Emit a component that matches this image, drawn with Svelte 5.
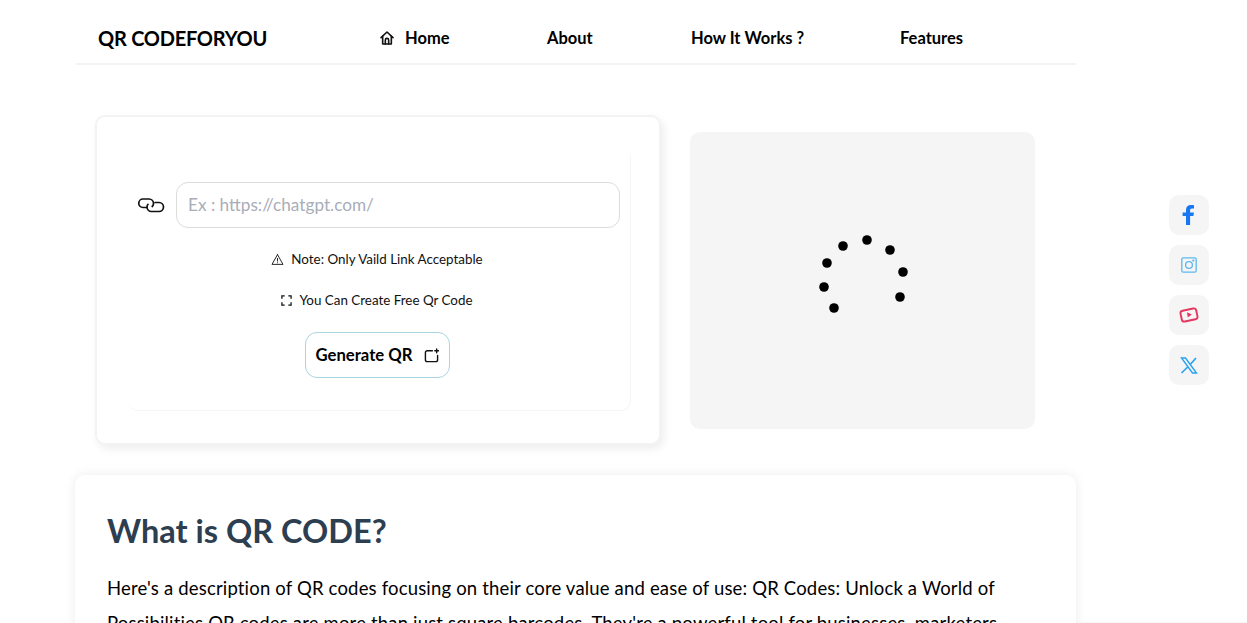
<script>
  const links = [
    { label: 'About', width: 144 },
    { label: 'How It Works ?', width: 209 },
    { label: 'Features', width: 100 }
  ];
  const dots = [
    [74, 10], [97, 20], [110, 42], [107, 67], [41, 78], [31, 57], [34, 33], [50, 16]
  ];
</script>

<div class="page">
  <div class="wrap">
    <header class="nav">
      <div class="logo">QR CODEFORYOU</div>
      <nav class="links">
        <a class="link home" href="#home">
          <svg width="16" height="16" viewBox="0 0 24 24" fill="none" stroke="#111" stroke-width="2.4" stroke-linejoin="round" stroke-linecap="round">
            <path d="M3 11.5 12 3l9 8.5" />
            <path d="M5.5 9.5V21h13V9.500" />
            <path d="M9.5 21v-6a2.5 2.5 0 0 1 5 0v6" />
          </svg>
          Home
        </a>
        {#each links as l}
          <a class="link" href="#x" style="width:{l.width}px">{l.label}</a>
        {/each}
      </nav>
    </header>

    <section class="hero">
      <div class="card">
        <div class="inner">
          <div class="field">
            <svg class="chain" width="28" height="16" viewBox="0 0 28 16" fill="none" stroke="#111" stroke-width="1.7" stroke-linecap="round">
              <path d="M9.500 10.500H6a4.250 4.250 0 0 1 0-8.500h6a4.500 4.500 0 0 1 4.500 4.500 4 4 0 0 1-1.300 3" />
              <path d="M18 5.500h4a4.500 4.500 0 0 1 0 9h-7.500A4.500 4.500 0 0 1 10 10a4 4 0 0 1 1-2.700" />
            </svg>
            <input type="text" placeholder="Ex : https://chatgpt.com/" />
          </div>
          <p class="note first">
            <svg width="13" height="13" viewBox="0 0 24 24" fill="none" stroke="#222" stroke-width="1.8" stroke-linejoin="round" stroke-linecap="round">
              <path d="M12 3 1.8 21h20.4L12 3Z" />
              <path d="M12 10v5M12 18v.2" />
            </svg>
            Note: Only Vaild Link Acceptable
          </p>
          <p class="note second">
            <svg width="11" height="11" viewBox="0 0 12 12" fill="none" stroke="#111" stroke-width="1.4">
              <path d="M1 4V1h3M8 1h3v3M11 8v3H8M4 11H1V8" />
            </svg>
            You Can Create Free Qr Code
          </p>
          <button class="generate">
            Generate QR
            <svg width="15" height="15" viewBox="0 0 16 16" fill="none" stroke="#111" stroke-width="1.5" stroke-linecap="round">
              <path d="M9 3H3.500a2 2 0 0 0-2 2v7.500a2 2 0 0 0 2 2h9a2 2 0 0 0 2-2V8" />
              <path d="M13.500 1v4M11.500 3h4" />
            </svg>
          </button>
        </div>
      </div>

      <div class="preview">
        <svg width="140" height="100" viewBox="0 0 140 100">
          {#each dots as d}
            <circle cx={d[0]} cy={d[1]} r="4.8" fill="#000" />
          {/each}
        </svg>
      </div>
    </section>

    <article class="about">
      <h2>What is QR CODE?</h2>
      <p>Here's a description of QR codes focusing on their core value and ease of use: QR Codes: Unlock a World of Possibilities QR codes are more than just square barcodes. They're a powerful tool for businesses, marketers and individuals alike.</p>
    </article>
  </div>

  <aside class="social">
    <a href="#f" aria-label="Facebook">
      <svg width="14" height="20" viewBox="0 0 14 20"><path fill="#1877f2" d="M4 20V11H.6V7.400H4V5C4 1.800 6 0 8.900 0c1.300 0 2.500.1 3.100.2v3.300h-2c-1.500 0-1.900.8-1.900 1.800v2.100h3.800l-.5 3.600H8.100v9H4Z"/></svg>
    </a>
    <a href="#i" aria-label="Instagram">
      <svg width="16" height="16" viewBox="0 0 16 16" fill="none" stroke="#5db7ee" stroke-width="1.300">
        <rect x=".8" y=".8" width="14.400" height="14.400" rx="1.500" />
        <circle cx="8" cy="8" r="3.400" />
        <circle cx="12.300" cy="3.600" r=".5" />
      </svg>
    </a>
    <a href="#y" aria-label="YouTube">
      <svg width="20" height="18" viewBox="0 0 20 18" fill="none" stroke="#e5365f" stroke-width="1.900">
        <rect x="2" y="3.500" width="16" height="11" rx="2.600" transform="rotate(-12 10 9)" />
        <path d="M8 6.300 12.800 8.600 8.800 11.600Z" fill="#e5365f" stroke="none" />
      </svg>
    </a>
    <a href="#t" aria-label="X">
      <svg width="18" height="17" viewBox="0 0 18 17" fill="none" stroke="#29a3f0" stroke-width="1.400">
        <path d="M1.500 1h4L16.500 16h-4L1.500 1Z" />
        <path d="M16 1 10.200 7.500M7.700 10 1.500 16" stroke-width="1.700" />
      </svg>
    </a>
  </aside>

  <div class="edge"></div>
</div>

<style>
  :global(html), :global(body) {
    margin: 0;
    height: 623px;
    overflow: hidden;
    background: #fff;
  }
  .page {
    position: relative;
    height: 623px;
    overflow: hidden;
    font-family: "Lato", "Liberation Sans", sans-serif;
    color: #000;
  }
  .wrap {
    width: 1000px;
    margin-left: 76px;
  }
  .nav {
    display: flex;
    align-items: center;
    box-sizing: border-box;
    height: 65px;
    border-bottom: 2px solid #f3f3f3;
    padding-left: 22px;
    padding-top: 13px;
  }
  .logo {
    width: 281px;
    font-size: 20px;
    font-weight: 700;
    letter-spacing: -0.25px;
  }
  .links {
    display: flex;
    align-items: center;
  }
  .link {
    color: #000;
    text-decoration: none;
    font-size: 16.5px;
    font-weight: 700;
    display: block;
  }
  .home {
    display: flex;
    align-items: center;
    gap: 10px;
    width: 168px;
  }
  .hero {
    display: flex;
    align-items: center;
    margin-top: 50px;
    margin-left: 19px;
  }
  .card {
    width: 566px;
    height: 330px;
    box-sizing: border-box;
    background: #fff;
    border: 2px solid #f3f3f3;
    border-radius: 10px;
    box-shadow: 3px 4px 8px rgba(0, 0, 0, 0.07);
    padding: 38px 28px 32px 31px;
  }
  .inner {
    height: 100%;
    box-sizing: border-box;
    border-right: 1px solid #f5f5f5;
    border-bottom: 1px solid #f5f5f5;
    border-radius: 0 0 10px 10px;
    padding-top: 27px;
    padding-right: 4px;
    display: flex;
    flex-direction: column;
    align-items: center;
  }
  .field {
    display: flex;
    align-items: center;
    width: 100%;
    box-sizing: border-box;
    padding-left: 9px;
    padding-right: 6px;
    gap: 11px;
  }
  .chain {
    flex: none;
  }
  input {
    flex: 1;
    min-width: 0;
    height: 46px;
    box-sizing: border-box;
    border: 1px solid #dcdcdc;
    border-radius: 12px;
    padding: 0 11px 2px;
    font-family: inherit;
    font-size: 17.2px;
    outline: none;
  }
  input::placeholder {
    color: #a9adb8;
  }
  .note {
    display: flex;
    align-items: center;
    gap: 7px;
    margin: 0;
    font-size: 13.4px;
    color: #111;
  }
  .first {
    margin-top: 23px;
  }
  .second {
    margin-top: 25px;
  }
  .generate {
    display: flex;
    align-items: center;
    justify-content: center;
    gap: 11px;
    width: 145px;
    height: 46px;
    margin-top: 24px;
    background: #fff;
    border: 1px solid #a9d5e2;
    border-radius: 12px;
    font-family: inherit;
    font-size: 16.7px;
    font-weight: 700;
    color: #000;
  }
  .preview {
    width: 345px;
    height: 297px;
    margin-left: 29px;
    background: #f5f5f5;
    border-radius: 10px;
    display: flex;
    align-items: center;
    justify-content: center;
  }
  .about {
    width: 1001px;
    margin-left: -1px;
    margin-top: 30px;
    box-sizing: border-box;
    height: 300px;
    background: #fff;
    border-radius: 10px;
    box-shadow: 0 0 12px rgba(0, 0, 0, 0.08);
    padding: 36px 60px 36px 32px;
  }
  h2 {
    margin: 0;
    font-size: 32.5px;
    line-height: 40px;
    font-weight: 700;
    color: #2c3e50;
  }
  .about p {
    margin: 20px 0 0;
    font-size: 18.5px;
    letter-spacing: 0.17px;
    line-height: 35px;
    color: #000;
  }
  .social {
    position: absolute;
    left: 1169px;
    top: 195px;
    display: flex;
    flex-direction: column;
    gap: 10px;
  }
  .social a {
    width: 40px;
    height: 40px;
    background: #f5f5f5;
    border-radius: 10px;
    display: flex;
    align-items: center;
    justify-content: center;
  }
  .edge {
    position: absolute;
    left: 1076px;
    right: 0;
    bottom: 0;
    height: 1px;
    background: #f6f6f6;
  }
</style>
